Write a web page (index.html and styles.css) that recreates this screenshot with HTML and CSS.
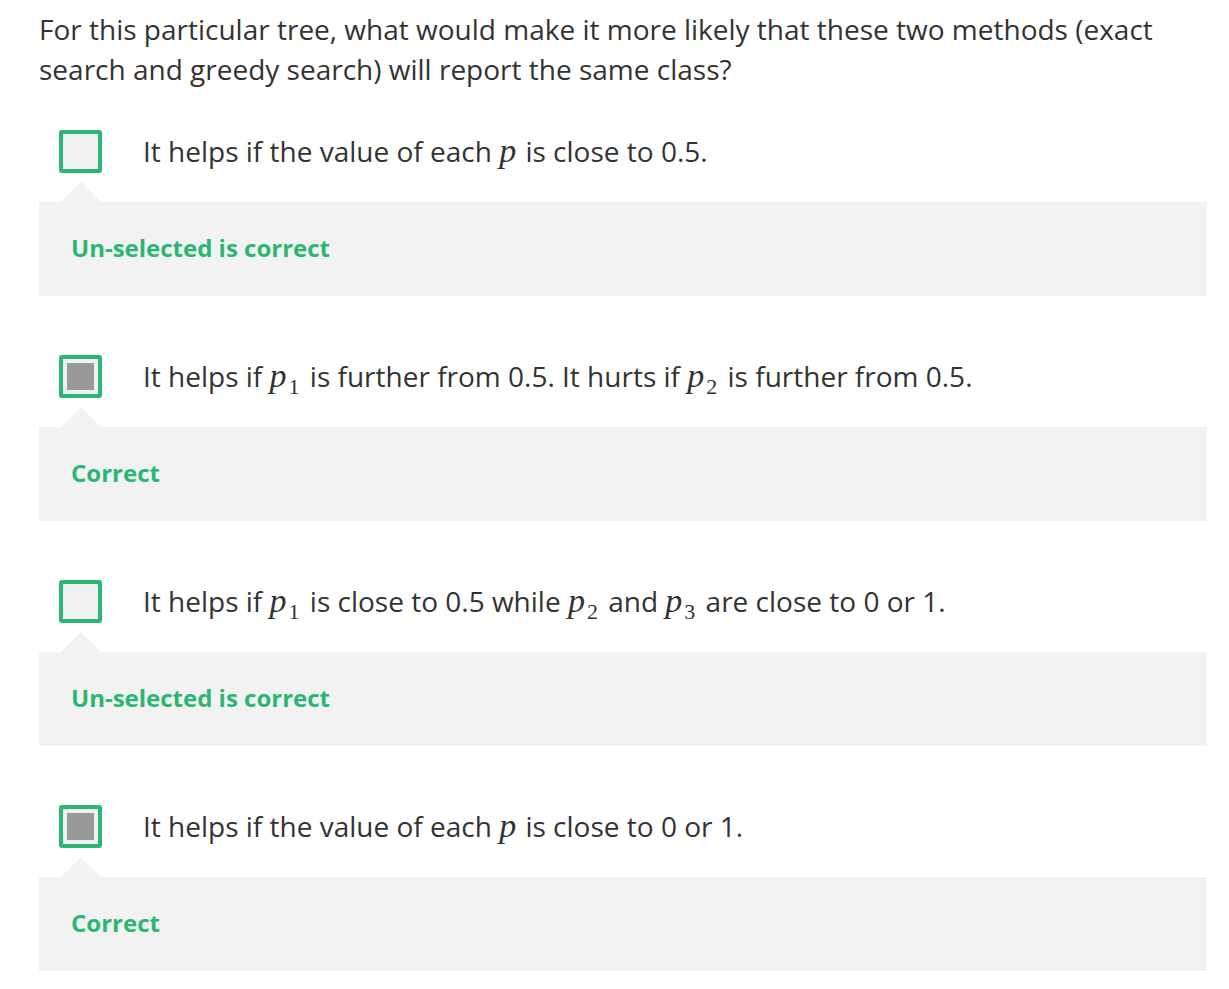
FILE: index.html
```html
<!DOCTYPE html>
<html>
<head>
<meta charset="utf-8">
<link rel="stylesheet" href="styles.css">
</head>
<body>
<div class="quiz">
  <p class="question">For this particular tree, what would make it more likely that these two methods (exact search and greedy search) will report the same class?</p>

  <div class="option">
    <div class="row">
      <span class="check"></span>
      <span class="label">It helps if the value of each <i class="m">p</i> is close to 0.5.</span>
    </div>
    <div class="feedback"><span>Un-selected is correct</span></div>
  </div>

  <div class="option">
    <div class="row">
      <span class="check checked"></span>
      <span class="label">It helps if <i class="m">p</i><sub class="s">1</sub> is further from 0.5. It hurts if <i class="m">p</i><sub class="s">2</sub> is further from 0.5.</span>
    </div>
    <div class="feedback"><span>Correct</span></div>
  </div>

  <div class="option">
    <div class="row">
      <span class="check"></span>
      <span class="label">It helps if <i class="m">p</i><sub class="s">1</sub> is close to 0.5 while <i class="m">p</i><sub class="s">2</sub> and <i class="m">p</i><sub class="s">3</sub> are close to 0 or 1.</span>
    </div>
    <div class="feedback"><span>Un-selected is correct</span></div>
  </div>

  <div class="option">
    <div class="row">
      <span class="check checked"></span>
      <span class="label">It helps if the value of each <i class="m">p</i> is close to 0 or 1.</span>
    </div>
    <div class="feedback"><span>Correct</span></div>
  </div>
</div>
</body>
</html>
```
FILE: styles.css
```css
html, body {
  margin: 0;
  padding: 0;
  background: #ffffff;
}

body {
  font-family: "Open Sans", "Noto Sans", sans-serif;
  color: #333333;
}

.quiz {
  width: 1168px;
  margin-left: 39px;
  padding-top: 9px;
}

.question {
  margin: 0 0 41px 0;
  font-size: 28px;
  line-height: 40px;
}

.option {
  display: flex;
  flex-direction: column;
  margin-bottom: 59px;
}

.row {
  display: flex;
  align-items: center;
  gap: 41px;
  padding-left: 20px;
  height: 43px;
}

.check {
  box-sizing: border-box;
  width: 43px;
  height: 43px;
  flex: none;
  border: 4px solid #2bb673;
  border-radius: 3px;
  background: #f0f0f0;
  display: flex;
  align-items: center;
  justify-content: center;
}

.check.checked::after {
  content: "";
  width: 27px;
  height: 27px;
  background: #999999;
}

.label {
  font-size: 28px;
  line-height: 40px;
  white-space: nowrap;
  padding-bottom: 2px;
}

.m {
  font-family: "Liberation Serif", "Times New Roman", serif;
  font-style: italic;
  font-size: 34px;
  line-height: 0;
  padding-right: 2px;
}

.s {
  font-family: "Liberation Serif", "Times New Roman", serif;
  font-size: 22px;
  line-height: 0;
  vertical-align: -7px;
  padding-right: 3px;
}

.feedback {
  position: relative;
  margin-top: 29px;
  height: 94px;
  box-sizing: border-box;
  padding-bottom: 4px;
  background: #f2f2f2;
  display: flex;
  align-items: center;
  padding-left: 32px;
  font-size: 24px;
  font-weight: 700;
  color: #2bb673;
}

.feedback::before {
  content: "";
  position: absolute;
  left: 22px;
  top: -20px;
  border-left: 20px solid transparent;
  border-right: 20px solid transparent;
  border-bottom: 20px solid #f2f2f2;
}
```
